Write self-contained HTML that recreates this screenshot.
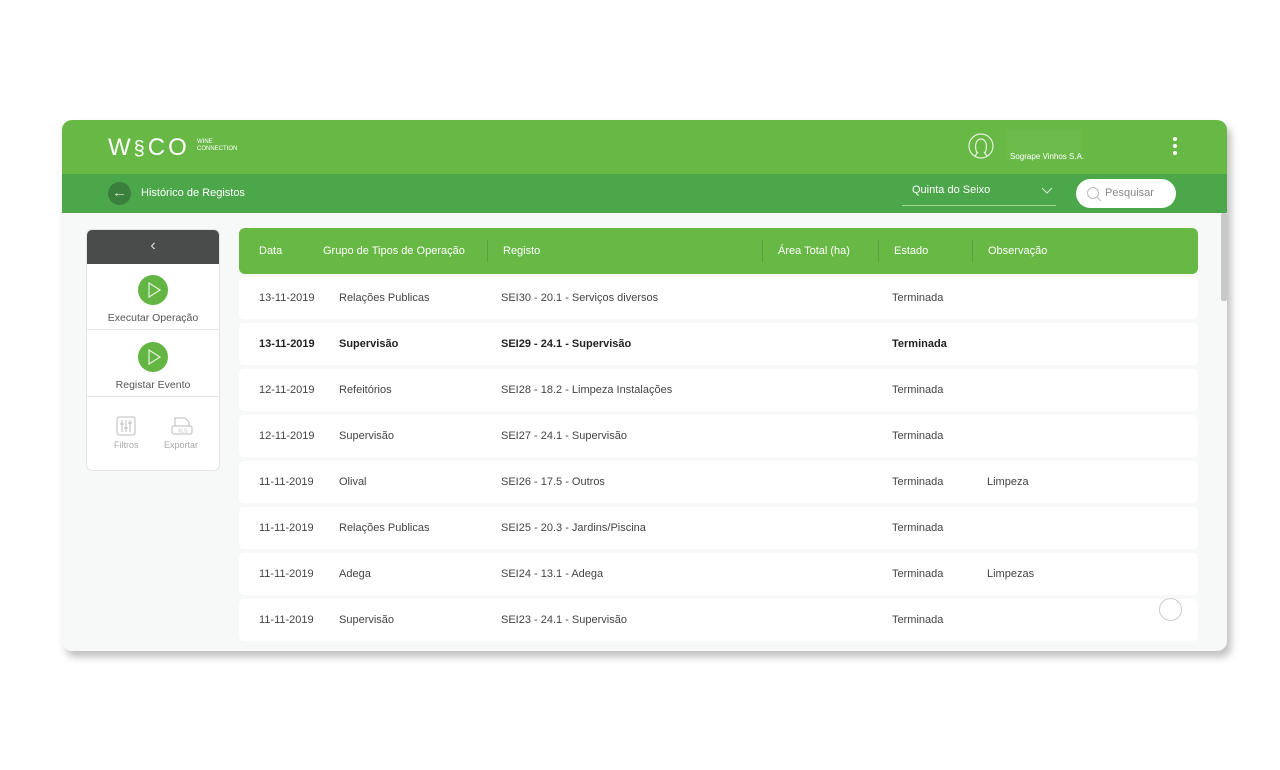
<!DOCTYPE html>
<html><head><meta charset="utf-8"><style>
*{margin:0;padding:0;box-sizing:border-box}
body{width:1280px;height:770px;background:#fff;font-family:"Liberation Sans",sans-serif;position:relative;overflow:hidden}
.card{position:absolute;left:62px;top:120px;width:1165px;height:531px;border-radius:10px;background:#f7f8f8;overflow:hidden;box-shadow:4px 6px 8px rgba(0,0,0,.25)}
.top{position:absolute;left:0;top:0;width:100%;height:54px;background:#68b846}
.sub{position:absolute;left:0;top:54px;width:100%;height:39px;background:#4ca64a}
.abs{position:absolute}
.side{position:absolute;left:24px;top:109px;width:134px;height:242px;background:#fff;border:1px solid #e3e3e3;border-radius:6px;overflow:hidden}
.side .hd{position:absolute;left:0;top:0;width:100%;height:34px;background:#4a4c4b;color:#ddd;text-align:center;font-size:16px;line-height:32px}
.line{position:absolute;left:0;width:100%;height:1px;background:#e6e6e6}
.lbl{position:absolute;left:0;width:100%;text-align:center;font-size:10.5px;color:#555}
.play{position:absolute;left:51px;width:30px;height:30px;border-radius:50%;background:#63b544}
.th{position:absolute;left:177px;top:108px;width:959px;height:46px;background:#68b846;border-radius:6px;color:#fff;font-size:11px}
.th span{position:absolute;top:17px}
.sep{position:absolute;top:12px;width:1px;height:22px;background:#57a23c}
.row{position:absolute;left:177px;width:959px;height:42px;background:#fff;border-radius:5px;font-size:11px;color:#444}
.row span{position:absolute;top:15px}
.b{font-weight:bold;color:#222}
</style></head><body>
<div class="card">
<div class="top">
 <div class="abs" style="left:46px;top:14px;color:#fff;font-size:24px;letter-spacing:3px;font-weight:300">W<span style="font-size:20px">§</span>CO</div>
 <div class="abs" style="left:135px;top:19px;color:#fff;font-size:6px;line-height:7px">WINE<br>CONNECTION</div>
 <svg class="abs" style="left:905px;top:11px" width="30" height="32" viewBox="0 0 30 32"><circle cx="14" cy="15" r="12" fill="none" stroke="#e6f2dd" stroke-width="1.2"/><path d="M10 22 C7 15 9 8 14 8 C19 8 21 15 18 22 M8 25 L11 21 M20 25 L17 21" fill="none" stroke="#e6f2dd" stroke-width="1.2"/></svg>
 <div class="abs" style="left:944px;top:10px;width:76px;height:30px;background:#6cbb4a"></div>
 <div class="abs" style="left:948px;top:32px;color:#fff;font-size:8px">Sogrape Vinhos S.A.</div>
 <div class="abs" style="left:1111px;top:17px;width:4px;height:4px;border-radius:50%;background:#fff;box-shadow:0 7px 0 #fff,0 14px 0 #fff"></div>
</div>
<div class="sub">
 <div class="abs" style="left:46px;top:8px;width:23px;height:23px;border-radius:50%;background:#3a7f3c;color:#cfe5c8;font-size:15px;line-height:21px;text-align:center">&#8592;</div>
 <div class="abs" style="left:79px;top:13px;color:#fff;font-size:11px">Histórico de Registos</div>
 <div class="abs" style="left:850px;top:10px;color:#fff;font-size:11px">Quinta do Seixo</div>
 <svg class="abs" style="left:979px;top:13px" width="12" height="8"><path d="M1 1 L6 6 L11 1" fill="none" stroke="#d8ecd0" stroke-width="1"/></svg>
 <div class="abs" style="left:840px;top:31px;width:154px;height:1px;background:#a5d68f"></div>
 <div class="abs" style="left:1014px;top:5px;width:100px;height:29px;border-radius:15px;background:#fff"></div>
 <svg class="abs" style="left:1024px;top:12px" width="16" height="16"><circle cx="7" cy="7" r="5.5" fill="none" stroke="#bbb"/><path d="M11 11 L15 15" stroke="#bbb"/></svg>
 <div class="abs" style="left:1043px;top:13px;color:#888;font-size:11px">Pesquisar</div>
</div>
<div class="side">
 <div class="hd">&#8249;</div>
 <div class="play" style="top:45px"><svg width="30" height="30"><path d="M11 8 L22 15 L11 22 Z" fill="none" stroke="#e5f3dd" stroke-width="1.2"/></svg></div>
 <div class="lbl" style="top:82px">Executar Operação</div>
 <div class="line" style="top:99px"></div>
 <div class="play" style="top:112px"><svg width="30" height="30"><path d="M11 8 L22 15 L11 22 Z" fill="none" stroke="#e5f3dd" stroke-width="1.2"/></svg></div>
 <div class="lbl" style="top:149px">Registar Evento</div>
 <div class="line" style="top:166px"></div>
 <svg class="abs" style="left:29px;top:186px" width="20" height="20"><rect x="1" y="1" width="18" height="18" rx="2" fill="none" stroke="#bbb"/><path d="M6 4V16M10 4V16M14 4V16M4 8H8M8 12H12M12 7H16" stroke="#bbb"/></svg>
 <svg class="abs" style="left:84px;top:186px" width="22" height="20"><path d="M4 10V2H14L18 6V10" fill="none" stroke="#bbb"/><rect x="1" y="10" width="20" height="8" rx="2" fill="none" stroke="#bbb"/><text x="7" y="16.5" font-size="5" fill="#bbb" font-family="Liberation Sans">XLS</text></svg>
 <div class="abs" style="left:27px;top:210px;font-size:9px;color:#aaa">Filtros</div>
 <div class="abs" style="left:77px;top:210px;font-size:9px;color:#aaa">Exportar</div>
</div>
<div class="th">
 <span style="left:20px">Data</span><span style="left:84px">Grupo de Tipos de Operação</span>
 <div class="sep" style="left:248px"></div><span style="left:264px">Registo</span>
 <div class="sep" style="left:523px"></div><span style="left:539px">Área Total (ha)</span>
 <div class="sep" style="left:639px"></div><span style="left:655px">Estado</span>
 <div class="sep" style="left:733px"></div><span style="left:749px">Observação</span>
</div>
<div class="row" style="top:157px"><span style="left:20px">13-11-2019</span><span style="left:100px">Relações Publicas</span><span style="left:262px">SEI30 - 20.1 - Serviços diversos</span><span style="left:653px">Terminada</span></div>
<div class="row b" style="top:203px"><span style="left:20px">13-11-2019</span><span style="left:100px">Supervisão</span><span style="left:262px">SEI29 - 24.1 - Supervisão</span><span style="left:653px">Terminada</span></div>
<div class="row" style="top:249px"><span style="left:20px">12-11-2019</span><span style="left:100px">Refeitórios</span><span style="left:262px">SEI28 - 18.2 - Limpeza Instalações</span><span style="left:653px">Terminada</span></div>
<div class="row" style="top:295px"><span style="left:20px">12-11-2019</span><span style="left:100px">Supervisão</span><span style="left:262px">SEI27 - 24.1 - Supervisão</span><span style="left:653px">Terminada</span></div>
<div class="row" style="top:341px"><span style="left:20px">11-11-2019</span><span style="left:100px">Olival</span><span style="left:262px">SEI26 - 17.5 - Outros</span><span style="left:653px">Terminada</span><span style="left:748px">Limpeza</span></div>
<div class="row" style="top:387px"><span style="left:20px">11-11-2019</span><span style="left:100px">Relações Publicas</span><span style="left:262px">SEI25 - 20.3 - Jardins/Piscina</span><span style="left:653px">Terminada</span></div>
<div class="row" style="top:433px"><span style="left:20px">11-11-2019</span><span style="left:100px">Adega</span><span style="left:262px">SEI24 - 13.1 - Adega</span><span style="left:653px">Terminada</span><span style="left:748px">Limpezas</span></div>
<div class="row" style="top:479px"><span style="left:20px">11-11-2019</span><span style="left:100px">Supervisão</span><span style="left:262px">SEI23 - 24.1 - Supervisão</span><span style="left:653px">Terminada</span></div>
<div class="abs" style="left:1097px;top:478px;width:23px;height:23px;border-radius:50%;border:1px solid #ccc;background:#fff"></div>
<div class="abs" style="left:1159px;top:93px;width:6px;height:88px;background:#c8c8c8;border-radius:2px"></div>
</div>
</body></html>
